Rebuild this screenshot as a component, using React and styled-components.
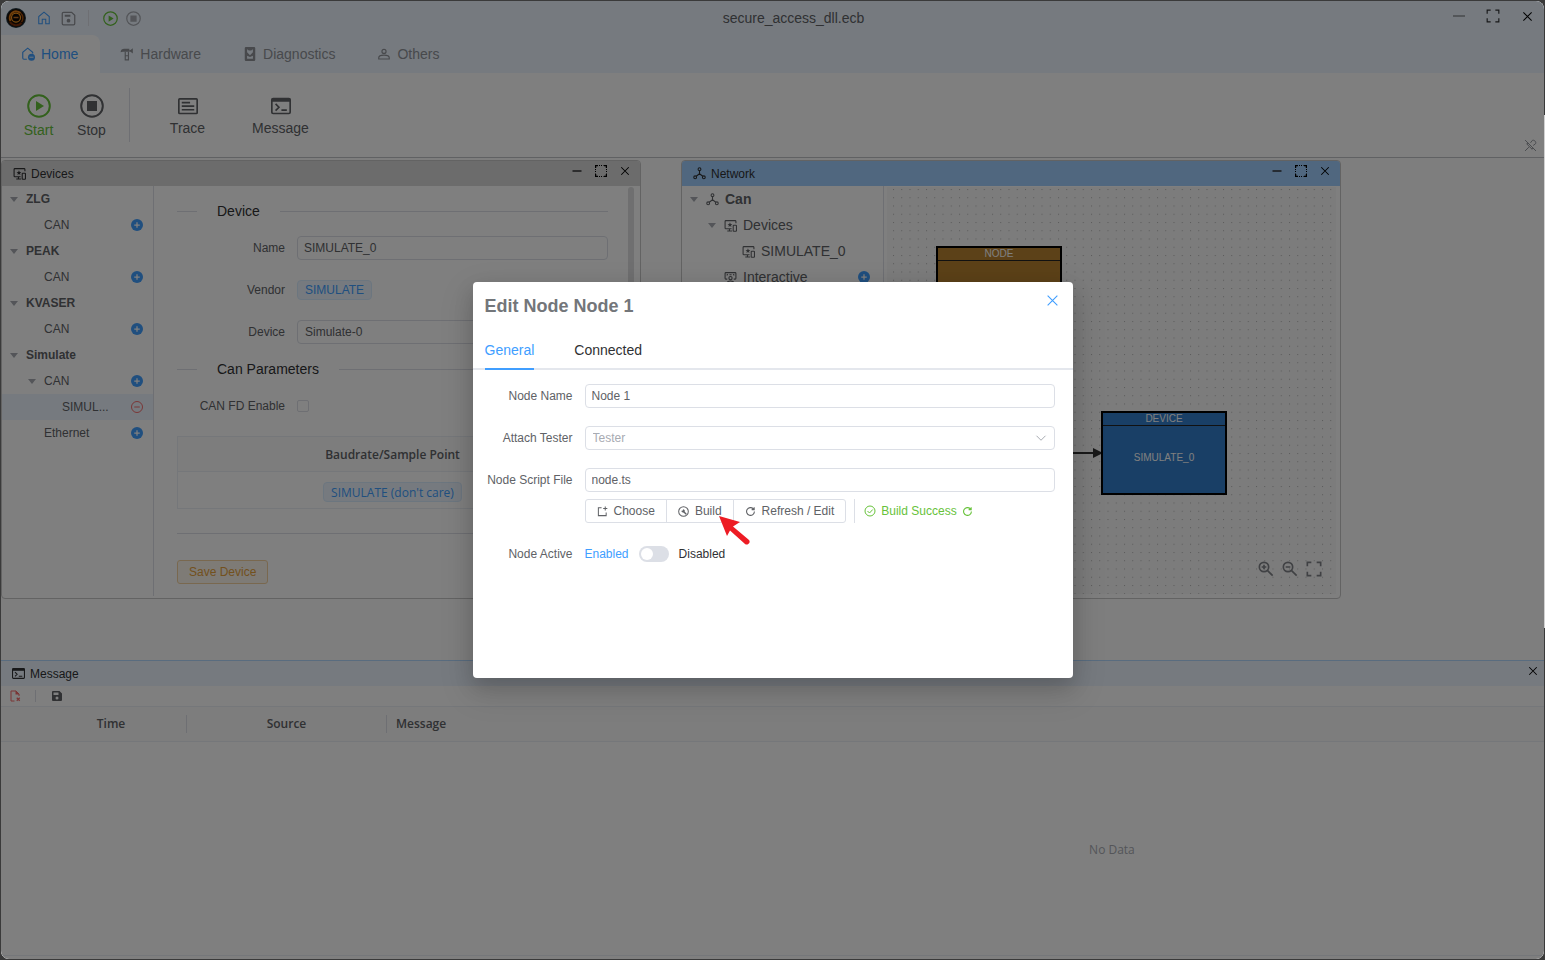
import { useState } from 'react'
import styled, { createGlobalStyle, css } from 'styled-components'

const c = {
  primary: '#409eff',
  primaryLight: '#ecf5ff',
  success: '#67c23a',
  warning: '#e6a23c',
  danger: '#f56c6c',
  text: '#303133',
  regular: '#606266',
  muted: '#909399',
  placeholder: '#a8abb2',
  border: '#dcdfe6',
  borderLight: '#e4e7ed',
  borderLighter: '#ebeef5'
}

const tableFont = "'Open Sans', 'Noto Sans', sans-serif"

const GlobalStyle = createGlobalStyle`
  * {
    box-sizing: border-box;
  }
  body {
    margin: 0;
    font-family: 'Liberation Sans', Arial, sans-serif;
    font-size: 12px;
    color: ${c.text};
  }
  button, input, select {
    font: inherit;
    color: inherit;
    margin: 0;
  }
`

/* ---------- icons ---------- */

const Svg = styled.svg`
  display: block;
  flex: none;
  fill: none;
  stroke: currentColor;
`

const Icon = ({ size = 14, w = 2, box = 24, children, ...rest }) => (
  <Svg width={size} height={size} viewBox={`0 0 ${box} ${box}`} strokeWidth={w} aria-hidden='true' {...rest}>
    {children}
  </Svg>
)

const Logo = () => (
  <Icon size={20} box={40} w={0}>
    <circle cx='20' cy='20' r='20' fill='#20343f' />
    <circle cx='20' cy='20' r='18' fill='#1c0f06' />
    <path d='M9 26a13 13 0 0 1 20-16' stroke='#e07b14' strokeWidth='4' />
    <path d='M29 10a13 13 0 0 1 2 18' stroke='#a04c0c' strokeWidth='3' />
    <path d='M8 28a15 15 0 0 0 23 2' stroke='#7a2c08' strokeWidth='4' />
    <circle cx='20' cy='19' r='9' fill='#0c0604' stroke='#ff9a1f' strokeWidth='2.500' />
    <path d='M15 19h10' stroke='#c87526' strokeWidth='3' />
  </Icon>
)

const HomeIcon = props => (
  <Icon {...props}>
    <path d='M9 22H3V9.500L12 2l9 7.500V22h-6v-8H9z' />
  </Icon>
)

const HomeTabIcon = props => (
  <Icon {...props}>
    <path d='M10 21H5a2 2 0 0 1-2-2V9l8.500-7L20 9v2' />
    <circle cx='18' cy='17.500' r='6' fill='currentColor' stroke='none' />
    <path d='M14.500 17.500h7' stroke='#fff' strokeWidth='1.500' />
  </Icon>
)

const SaveIcon = props => (
  <Icon {...props}>
    <path d='M4 2h13l5 5v13a2 2 0 0 1-2 2H4a2 2 0 0 1-2-2V4a2 2 0 0 1 2-2z' />
    <path d='M6 7.500h9' strokeWidth='3' />
    <circle cx='12' cy='15.500' r='3' fill='currentColor' stroke='none' />
  </Icon>
)

const SaveFilledIcon = props => (
  <Icon {...props}>
    <path
      d='M4 2h13l5 5v13a2 2 0 0 1-2 2H4a2 2 0 0 1-2-2V4a2 2 0 0 1 2-2zm1 3v5h10V5zm7 8a3 3 0 1 0 0 6 3 3 0 0 0 0-6z'
      fill='currentColor'
      fillRule='evenodd'
      stroke='none'
    />
  </Icon>
)

const PlayIcon = props => (
  <Icon {...props}>
    <circle cx='12' cy='12' r='10.800' />
    <path d='M9 7v10l8-5z' fill='currentColor' stroke='none' />
  </Icon>
)

const StopIcon = props => (
  <Icon {...props}>
    <circle cx='12' cy='12' r='10.800' />
    <path d='M7 7h10v10H7z' fill='currentColor' stroke='none' />
  </Icon>
)

const HammerIcon = props => (
  <Icon {...props}>
    <path d='M1 9c0-4 3-6 6-6h9v5h-6H5z' fill='currentColor' stroke='none' />
    <path d='M16 5h2l4-3v9l-4-3h-2z' fill='currentColor' stroke='none' />
    <path d='M9 8v14h5.500V8M9 15h5' />
  </Icon>
)

const DiagnosticsIcon = props => (
  <Icon {...props}>
    <path
      d='M5 0h14a2 2 0 0 1 2 2v20a2 2 0 0 1-2 2H5a2 2 0 0 1-2-2V2a2 2 0 0 1 2-2zm2 4v5l5 5 5-5V4l-3 2h-4zm0 11v5h10v-5l-5 2z'
      fill='currentColor'
      fillRule='evenodd'
      stroke='none'
    />
  </Icon>
)

const UserIcon = props => (
  <Icon {...props}>
    <circle cx='12' cy='7.500' r='3.500' />
    <path d='M3 20.500v-2c0-3 4-4.500 9-4.500s9 1.500 9 4.500v2z' />
  </Icon>
)

const TraceIcon = props => (
  <Icon {...props}>
    <rect x='1' y='3.500' width='22' height='17.500' rx='1' />
    <path d='M4.500 8h10M4.500 12.200h15M4.500 16.500h15' />
  </Icon>
)

const TerminalIcon = props => (
  <Icon {...props}>
    <rect x='1' y='3' width='22' height='18' rx='1.500' />
    <path d='M1 5h22' strokeWidth='4' />
    <path d='M5.500 9.500l4 4-4 4M12.500 17h6.500' />
  </Icon>
)

const DevicesIcon = props => (
  <Icon {...props}>
    <path d='M22 8V4.500a1.500 1.500 0 0 0-1.500-1.500h-17A1.500 1.500 0 0 0 2 4.500v12A1.500 1.500 0 0 0 3.500 18H14M10 18v4M6 22h9' />
    <rect x='17' y='11.500' width='6' height='11' rx='1' />
    <path d='M11 6l1.300 3.200 3.200.3-2.500 2 .8 3.200L11 13l-2.800 1.700.8-3.200-2.500-2 3.200-.3z' fill='currentColor' stroke='none' />
  </Icon>
)

const NetworkIcon = props => (
  <Icon {...props}>
    <circle cx='12' cy='4' r='2.600' />
    <circle cx='4' cy='19' r='2.600' />
    <circle cx='20' cy='19' r='2.600' />
    <path d='M12 7v6M12 12.500L6 17M12 12.500L18 17' />
  </Icon>
)

const InteractiveIcon = props => (
  <Icon {...props}>
    <path d='M6 15H3.500A1.500 1.500 0 0 1 2 13.500v-9A1.500 1.500 0 0 1 3.500 3h17A1.500 1.500 0 0 1 22 4.500v9a1.500 1.500 0 0 1-1.500 1.500H18' />
    <circle cx='12' cy='13' r='3' />
    <path d='M5.500 23c0-3 3-4.500 6.500-4.500s6.500 1.500 6.500 4.500M5 8l2-2M17 6l2 2M10 7h4' />
  </Icon>
)

const PlusIcon = props => (
  <Icon {...props}>
    <circle cx='12' cy='12' r='12' fill='currentColor' stroke='none' />
    <path d='M12 6.500v11M6.500 12h11' stroke='#fff' strokeWidth='2.500' />
  </Icon>
)

const MinusIcon = props => (
  <Icon {...props}>
    <circle cx='12' cy='12' r='11' />
    <path d='M6.500 12h11' />
  </Icon>
)

const CaretIcon = () => (
  <Icon size={10} box={10}>
    <path d='M1 3h8L5 8z' fill='currentColor' stroke='none' />
  </Icon>
)

const CloseIcon = props => (
  <Icon {...props}>
    <path d='M3 3l18 18M21 3L3 21' />
  </Icon>
)

const DashIcon = props => (
  <Icon {...props}>
    <path d='M3 12h18' />
  </Icon>
)

const ExpandIcon = props => (
  <Icon {...props}>
    <path d='M2 8V2h6M16 2h6v6M22 16v6h-6M8 22H2v-6' />
  </Icon>
)

const MarqueeIcon = () => (
  <Icon size={12} box={12} w={1}>
    <path d='M.500 3V.500H3M9 .500h2.500V3M11.500 9v2.500H9M3 11.500H.500V9' strokeWidth='1.500' />
    <path d='M4 .500h4.500M4 11.500h4.500M.500 4v4.500M11.500 4v4.500' strokeDasharray='1 1' />
  </Icon>
)

const PinOffIcon = props => (
  <Icon {...props}>
    <path d='M2 2l20 20M2 22l7-7M5 9l10 10M5 9l4-1M15 19l1-4M12 7l3-4c3-3 9 3 6 6l-4 3' />
  </Icon>
)

const ZoomIcon = ({ plus, ...rest }) => (
  <Icon {...rest}>
    <circle cx='9' cy='9' r='7' />
    <path d='M14 14l8 8' />
    <path d={plus ? 'M9 5.500v7M5.500 9h7' : 'M5.500 9h7'} />
  </Icon>
)

const ChooseIcon = props => (
  <Icon {...props}>
    <path d='M10 4H3v17h17v-7M18 1v9M13.500 5.500h9' />
  </Icon>
)

const BuildIcon = props => (
  <Icon {...props}>
    <circle cx='12' cy='12' r='10.500' />
    <path d='M12 12l6 6' strokeWidth='3' />
    <path d='M8.500 7.500l2.500 2.500v-3c3 0 4.500 2 3.500 5l-2 2c-3 1-5-.500-5-3.500h3z' fill='currentColor' stroke='none' />
  </Icon>
)

const RefreshIcon = props => (
  <Icon {...props}>
    <path d='M20.500 12a8.500 8.500 0 1 1-2.500-6l1.500 1.500M20 2.500V8h-5.500' />
  </Icon>
)

const CheckIcon = props => (
  <Icon {...props}>
    <circle cx='12' cy='12' r='10' />
    <path d='M7 12l4 4 6.500-7' />
  </Icon>
)

const ChevronIcon = props => (
  <Icon {...props}>
    <path d='M3 7.500l9 9 9-9' />
  </Icon>
)

const FileRemoveIcon = props => (
  <Icon {...props}>
    <path d='M11 22H4V2h10l6 6v4' />
    <path d='M13 1v8h8z' fill='currentColor' stroke='none' />
    <path d='M15.500 15.500l6 6M21.500 15.500l-6 6' strokeWidth='2.500' />
  </Icon>
)

/* ---------- frame ---------- */

const Desktop = styled.div`
  height: 100vh;
  padding: 1px;
  background: linear-gradient(#d0d0d0, #d0d0d0) right 115px / 1px 513px no-repeat, #3a3a3a;
`

const AppWindow = styled.div`
  position: relative;
  display: flex;
  flex-direction: column;
  height: 100%;
  border-radius: 8px;
  overflow: hidden;
  background: #fff;
`

const IconButton = styled.button`
  display: flex;
  align-items: center;
  justify-content: center;
  flex: none;
  width: ${p => p.$w || 24}px;
  height: ${p => p.$h || 24}px;
  padding: 0;
  border: 0;
  background: none;
  color: ${p => p.$color || '#000'};
  cursor: pointer;
`

const TitleBar = styled.header`
  display: flex;
  align-items: center;
  flex: none;
  height: 34px;
  background: ${c.primaryLight};
`

const QuickActions = styled.div`
  display: flex;
  align-items: center;
  flex: none;
  width: 144px;
  padding-left: 5px;
`

const VLine = styled.span`
  flex: none;
  width: 1px;
  height: ${p => p.$h}px;
  margin: 0 ${p => p.$gap || 0}px;
  background: ${c.border};
`

const AppTitle = styled.h1`
  flex: 1;
  margin: 0;
  font-size: 14px;
  font-weight: 400;
  text-align: center;
  color: ${c.regular};
`

const WindowControls = styled.div`
  display: flex;
  align-self: flex-start;
`

const TabBar = styled.nav`
  display: flex;
  flex: none;
  height: 38px;
  background: ${c.primaryLight};
`

const RibbonTab = styled.button`
  display: flex;
  align-items: center;
  gap: 6px;
  padding: 0 22px 0 20px;
  border: 0;
  border-radius: 0 8px 0 0;
  font-size: 14px;
  background: ${p => (p.$active ? '#fff' : 'none')};
  color: ${p => (p.$active ? c.primary : c.muted)};
`

const Ribbon = styled.div`
  display: flex;
  align-items: center;
  flex: none;
  height: 85px;
  padding-left: 11px;
  border-bottom: 1px solid #c0c2c6;
`

const RibbonButton = styled.button`
  display: flex;
  flex-direction: column;
  align-items: center;
  gap: 2px;
  width: ${p => (p.$wide ? 93 : 53)}px;
  padding: 4px 0 0;
  border: 0;
  background: none;
  font-size: 14px;
  line-height: 20px;
  color: ${p => p.$color || c.regular};
`

const PinButton = styled(IconButton)`
  align-self: flex-end;
  margin-left: auto;
  margin-right: 2px;
`

/* ---------- workspace windows ---------- */

const Workspace = styled.main`
  position: relative;
  flex: 1;
  min-height: 0;
  overflow: hidden;
  background: #fcfcfc;
`

const Pane = styled.section`
  position: absolute;
  top: 2px;
  left: ${p => p.$left}px;
  display: flex;
  flex-direction: column;
  width: ${p => p.$width}px;
  height: 439px;
  border: 1px solid #c6c6c6;
  border-radius: 4px;
  background: #fff;
  overflow: hidden;
`

const PaneHeader = styled.div`
  display: flex;
  align-items: center;
  flex: none;
  gap: 5px;
  height: 25px;
  padding: 0 3px 0 11px;
  background: ${p => p.$bg};
  color: ${c.text};
`

const PaneTitle = styled.h2`
  flex: 1;
  margin: 0;
  font-size: 12px;
  font-weight: 400;
`

const PaneBody = styled.div`
  display: flex;
  flex: 1;
  min-height: 0;
  padding-bottom: 2px;
`

const Tree = styled.ul`
  flex: none;
  width: ${p => p.$width}px;
  margin: 0;
  padding: 0;
  list-style: none;
  border-right: 1px solid ${c.border};
  font-size: ${p => p.$size || 12}px;
  color: ${c.regular};
`

const TreeRow = styled.li`
  display: flex;
  align-items: center;
  height: 26px;
  padding-left: ${p => p.$level * 18}px;
  padding-right: ${p => p.$end}px;
  background: ${p => (p.$selected ? c.primaryLight : 'none')};
  font-weight: ${p => (p.$bold ? 700 : 400)};
`

const CaretBox = styled.span`
  display: flex;
  justify-content: center;
  flex: none;
  width: 24px;
  color: ${c.placeholder};
`

const TreeIcon = styled.span`
  width: 19px;
  flex: none;
`

const TreeLabel = styled.span`
  flex: 1;
  overflow: hidden;
  white-space: nowrap;
`

const FormArea = styled.form`
  display: flex;
  flex-direction: column;
  flex: 1;
  min-width: 0;
  padding: 18px 8px 0 23px;
`

const ScrollTrack = styled.div`
  width: 6px;
  height: 340px;
  margin: 1px 6px 0 12px;
  border-radius: 3px;
  background: #dedfe0;
`

const Divider = styled.div`
  display: flex;
  align-items: center;
  gap: 20px;
  height: 14px;
  margin-bottom: 18px;
  font-size: 14px;
  &::before,
  &::after {
    content: '';
    height: 1px;
    background: ${c.border};
  }
  &::before {
    width: 20px;
  }
  &::after {
    flex: 1;
  }
`

const Rule = styled.hr`
  width: 100%;
  height: 1px;
  margin: 24px 0 26px;
  border: 0;
  background: ${c.border};
`

const Field = styled.div`
  display: grid;
  grid-template-columns: ${p => p.$label || 108}px 1fr;
  column-gap: 12px;
  align-items: center;
  min-height: 24px;
  margin-bottom: ${p => (p.$tight ? 7 : 18)}px;
  color: ${c.regular};
  & > label,
  & > span:first-child {
    text-align: right;
    white-space: nowrap;
  }
`

const boxed = css`
  width: 100%;
  height: 24px;
  padding: 0 7px;
  border: 1px solid ${c.border};
  border-radius: 4px;
  background: #fff;
  color: ${c.regular};
  outline: none;
`

const TextInput = styled.input`
  ${boxed}
  padding: 0 6px;
`

const SelectBox = styled.div`
  position: relative;
  & > svg {
    position: absolute;
    top: 6px;
    right: 8px;
    color: ${c.placeholder};
    pointer-events: none;
  }
`

const Select = styled.select`
  ${boxed}
  appearance: none;
  color: ${p => (p.$empty ? c.placeholder : c.regular)};
`

const Tag = styled.span`
  display: inline-flex;
  align-items: center;
  justify-self: start;
  height: 20px;
  padding: 0 7px;
  border: 1px solid #d9ecff;
  border-radius: 4px;
  background: ${c.primaryLight};
  color: ${c.primary};
`

const Checkbox = styled.input`
  appearance: none;
  width: 12px;
  height: 12px;
  border: 1px solid ${c.border};
  border-radius: 2px;
`

const BaudTable = styled.table`
  width: 100%;
  border: 1px solid ${c.borderLighter};
  border-collapse: separate;
  border-spacing: 0;
  font-family: ${tableFont};
  color: ${c.regular};
  th {
    height: 35px;
    padding: 0;
    border-bottom: 1px solid ${c.borderLighter};
    background: #fafafa;
    font-weight: 600;
  }
  td {
    height: 36px;
    padding: 4px 0 0;
    text-align: center;
  }
`

const SaveButton = styled.button`
  align-self: flex-start;
  height: 24px;
  padding: 0 11px;
  border: 1px solid #f3d19e;
  border-radius: 3px;
  background: #fdf6ec;
  color: ${c.warning};
`

/* ---------- network graph ---------- */

const Graph = styled.div`
  position: relative;
  flex: 1;
  margin: 1px 4px 2px 3px;
  background: #f8f8f8;
  & > svg {
    position: absolute;
    inset: 0;
  }
`

const GraphNode = styled.div`
  position: absolute;
  left: ${p => p.$x}px;
  top: ${p => p.$y}px;
  display: flex;
  flex-direction: column;
  width: 126px;
  height: 84px;
  border: 2px solid #000;
  background: ${p => p.$bg};
  font-size: 10px;
  text-align: center;
  color: #fff;
`

const NodeKind = styled.div`
  height: 13px;
  line-height: 12px;
  border-bottom: 1px solid #222;
`

const NodeName = styled.div`
  display: flex;
  flex: 1;
  align-items: center;
  justify-content: center;
  padding-bottom: 4px;
`

const GraphTools = styled.div`
  position: absolute;
  right: 10px;
  bottom: 13px;
  display: flex;
`

/* ---------- message panel ---------- */

const MessagePanel = styled.section`
  display: flex;
  flex-direction: column;
  flex: none;
  height: 299px;
  padding-bottom: 3px;
  border-top: 1px solid #b3d8ff;
  background: #fff;
`

const MessageTools = styled.div`
  display: flex;
  align-items: center;
  flex: none;
  height: 20px;
  padding-left: 2px;
`

const MessageTable = styled.table`
  width: 100%;
  table-layout: fixed;
  border-collapse: separate;
  border-spacing: 0;
  border-top: 1px solid ${c.borderLighter};
  font-family: ${tableFont};
  color: ${c.regular};
  th {
    height: 35px;
    padding: 0;
    border-bottom: 1px solid ${c.borderLighter};
    background: #fafafa;
    font-weight: 600;
  }
`

const HeadCell = styled.div`
  line-height: 18px;
  padding-left: ${p => (p.$left ? 9 : 0)}px;
  text-align: ${p => (p.$left ? 'left' : 'center')};
  border-right: ${p => (p.$line ? `1px solid ${c.border}` : 0)};
`

const Empty = styled.p`
  flex: 1;
  margin: 0;
  padding: 98px 0 0 44%;
  border-bottom: 1px solid ${c.borderLighter};
  font-family: ${tableFont};
  line-height: 20px;
  text-align: center;
  color: ${c.placeholder};
`

/* ---------- dialog ---------- */

const Overlay = styled.div`
  position: absolute;
  inset: 0;
  display: flex;
  align-items: center;
  justify-content: center;
  background: rgba(0, 0, 0, 0.5);
`

const Dialog = styled.div`
  position: relative;
  width: 600px;
  min-height: 396px;
  border-radius: 4px;
  background: #fff;
  box-shadow: 0 12px 32px 4px rgba(0, 0, 0, 0.12), 0 8px 20px rgba(0, 0, 0, 0.12);
`

const DialogHeader = styled.div`
  display: flex;
  justify-content: space-between;
  height: 48px;
  padding: 12px 8px 0 12px;
`

const DialogTitle = styled.h2`
  margin: 0;
  font-size: 18px;
  line-height: 24px;
  color: #73767a;
`

const DialogTabs = styled.div`
  display: flex;
  gap: 40px;
  height: 40px;
  padding-left: 12px;
  border-bottom: 2px solid ${c.borderLight};
`

const DialogTab = styled.button`
  height: 40px;
  padding: 2px 0 0;
  border: 0;
  border-bottom: 2px solid ${p => (p.$active ? c.primary : 'transparent')};
  background: none;
  font-size: 14px;
  color: ${p => (p.$active ? c.primary : c.text)};
`

const DialogForm = styled.form`
  padding: 14px 18px 0 0;
`

const ActionRow = styled.div`
  display: flex;
  align-items: center;
  padding-left: 112px;
  margin-bottom: 19px;
`

const GroupButton = styled.button`
  display: flex;
  align-items: center;
  gap: 6px;
  height: 24px;
  padding: 0 11px;
  border: 1px solid ${c.border};
  background: #fff;
  color: ${c.regular};
  & + & {
    margin-left: -1px;
  }
  &:first-child {
    border-radius: 3px 0 0 3px;
  }
  &:nth-child(3) {
    border-radius: 0 3px 3px 0;
  }
`

const BuildStatus = styled.span`
  display: flex;
  align-items: center;
  gap: 5px;
  padding-left: 1px;
  color: ${c.success};
`

const SwitchRow = styled.div`
  display: flex;
  align-items: center;
  gap: 10px;
`

const SwitchLabel = styled.label`
  color: ${p => (p.$on ? c.primary : c.text)};
`

const Switch = styled.input`
  appearance: none;
  width: 30px;
  height: 16px;
  padding: 2px;
  border-radius: 8px;
  background: ${c.border};
  &::before {
    content: '';
    display: block;
    width: 12px;
    height: 12px;
    border-radius: 50%;
    background: #fff;
  }
  &:checked {
    background: ${c.primary};
  }
  &:checked::before {
    margin-left: auto;
  }
`

const Pointer = styled.svg`
  position: absolute;
  left: 246px;
  top: 234px;
  pointer-events: none;
`

/* ---------- data ---------- */

const deviceTree = [
  { label: 'ZLG', level: 0, open: true },
  { label: 'CAN', level: 1, action: 'add' },
  { label: 'PEAK', level: 0, open: true },
  { label: 'CAN', level: 1, action: 'add' },
  { label: 'KVASER', level: 0, open: true },
  { label: 'CAN', level: 1, action: 'add' },
  { label: 'Simulate', level: 0, open: true },
  { label: 'CAN', level: 1, open: true, action: 'add' },
  { label: 'SIMUL...', level: 2, action: 'remove', selected: true },
  { label: 'Ethernet', level: 1, action: 'add' }
]

const networkTree = [
  { label: 'Can', level: 0, open: true, icon: NetworkIcon },
  { label: 'Devices', level: 1, open: true, icon: DevicesIcon },
  { label: 'SIMULATE_0', level: 2, icon: DevicesIcon },
  { label: 'Interactive', level: 1, action: 'add', icon: InteractiveIcon }
]

const ribbonTabs = [
  { label: 'Home', icon: HomeTabIcon },
  { label: 'Hardware', icon: HammerIcon },
  { label: 'Diagnostics', icon: DiagnosticsIcon },
  { label: 'Others', icon: UserIcon }
]

/* ---------- parts ---------- */

const PaneControls = () => (
  <WindowControls>
    <IconButton $h={20} $color={c.text} aria-label='Minimize'><DashIcon size={12} w={3} /></IconButton>
    <IconButton $h={20} aria-label='Maximize'><MarqueeIcon /></IconButton>
    <IconButton $h={20} aria-label='Close'><CloseIcon size={10} w={2.5} /></IconButton>
  </WindowControls>
)

const TreeItem = ({ item, end = 10 }) => {
  const ItemIcon = item.icon
  return (
    <TreeRow $level={item.level} $selected={item.selected} $bold={item.level === 0} $end={end}>
      <CaretBox>{item.open && <CaretIcon />}</CaretBox>
      {ItemIcon && <TreeIcon><ItemIcon size={13} /></TreeIcon>}
      <TreeLabel>{item.label}</TreeLabel>
      {item.action === 'add' && (
        <IconButton $w={12} $h={12} $color={c.primary} aria-label='Add'><PlusIcon size={12} /></IconButton>
      )}
      {item.action === 'remove' && (
        <IconButton $w={12} $h={12} $color={c.danger} aria-label='Remove'><MinusIcon size={12} /></IconButton>
      )}
    </TreeRow>
  )
}

const DevicesPane = () => (
  <Pane $left={0} $width={640}>
    <PaneHeader $bg='#d9d9d9'>
      <DevicesIcon size={13} />
      <PaneTitle>Devices</PaneTitle>
      <PaneControls />
    </PaneHeader>
    <PaneBody>
      <Tree $width={152}>
        {deviceTree.map((item, i) => <TreeItem key={i} item={item} />)}
      </Tree>
      <FormArea>
        <Divider>Device</Divider>
        <Field>
          <label htmlFor='dev-name'>Name</label>
          <TextInput id='dev-name' defaultValue='SIMULATE_0' />
        </Field>
        <Field>
          <span>Vendor</span>
          <Tag>SIMULATE</Tag>
        </Field>
        <Field>
          <label htmlFor='dev-device'>Device</label>
          <Select id='dev-device'><option>Simulate-0</option></Select>
        </Field>
        <Divider>Can Parameters</Divider>
        <Field>
          <label htmlFor='dev-fd'>CAN FD Enable</label>
          <Checkbox id='dev-fd' type='checkbox' />
        </Field>
        <BaudTable>
          <thead>
            <tr><th>Baudrate/Sample Point</th></tr>
          </thead>
          <tbody>
            <tr><td><Tag>SIMULATE (don't care)</Tag></td></tr>
          </tbody>
        </BaudTable>
        <Rule />
        <SaveButton type='button'>Save Device</SaveButton>
      </FormArea>
      <ScrollTrack />
    </PaneBody>
  </Pane>
)

const NetworkPane = () => (
  <Pane $left={680} $width={660}>
    <PaneHeader $bg='#a0cfff'>
      <NetworkIcon size={13} />
      <PaneTitle>Network</PaneTitle>
      <PaneControls />
    </PaneHeader>
    <PaneBody>
      <Tree $width={202} $size={14}>
        {networkTree.map(item => <TreeItem key={item.label} item={item} end={13} />)}
      </Tree>
      <Graph>
        <svg width='100%' height='100%'>
          <defs>
            <pattern id='dots' x='6' y='2' width='8.250' height='8.250' patternUnits='userSpaceOnUse'>
              <rect width='1' height='1' fill='#b4b4b4' />
            </pattern>
          </defs>
          <rect width='100%' height='100%' fill='url(#dots)' />
          <path d='M112 100v166h100' stroke='#333' strokeWidth='2' fill='none' />
          <path d='M206 261l10 5-10 5z' fill='#333' />
        </svg>
        <GraphNode $x={49} $y={59} $bg='#b88230'>
          <NodeKind>NODE</NodeKind>
          <NodeName>Node 1</NodeName>
        </GraphNode>
        <GraphNode $x={214} $y={224} $bg='#337ecc'>
          <NodeKind>DEVICE</NodeKind>
          <NodeName>SIMULATE_0</NodeName>
        </GraphNode>
        <GraphTools>
          <IconButton $color='#808388' aria-label='Zoom in'><ZoomIcon plus size={16} w={2.5} /></IconButton>
          <IconButton $color='#808388' aria-label='Zoom out'><ZoomIcon size={16} w={2.5} /></IconButton>
          <IconButton $color='#808388' aria-label='Fit'><ExpandIcon size={16} w={2.5} /></IconButton>
        </GraphTools>
      </Graph>
    </PaneBody>
  </Pane>
)

const Messages = () => (
  <MessagePanel>
    <PaneHeader $bg={c.primaryLight}>
      <TerminalIcon size={13} />
      <PaneTitle>Message</PaneTitle>
      <WindowControls>
        <IconButton $w={17} $h={20} aria-label='Close'><CloseIcon size={10} w={2.5} /></IconButton>
      </WindowControls>
    </PaneHeader>
    <MessageTools>
      <IconButton $h={20} $color={c.danger} aria-label='Clear'><FileRemoveIcon size={12} w={2} /></IconButton>
      <VLine $h={12} $gap={8} />
      <IconButton $w={26} $h={20} $color={c.regular} aria-label='Save'><SaveFilledIcon size={12} /></IconButton>
    </MessageTools>
    <MessageTable>
      <colgroup>
        <col width='35' />
        <col width='151' />
        <col width='200' />
        <col />
      </colgroup>
      <thead>
        <tr>
          <th aria-label='Type' />
          <th><HeadCell $line>Time</HeadCell></th>
          <th><HeadCell $line>Source</HeadCell></th>
          <th><HeadCell $left>Message</HeadCell></th>
        </tr>
      </thead>
    </MessageTable>
    <Empty>No Data</Empty>
  </MessagePanel>
)

const EditNodeDialog = () => {
  const [tab, setTab] = useState('General')
  const [tester, setTester] = useState('')
  const [disabled, setDisabled] = useState(false)
  return (
    <Overlay>
      <Dialog role='dialog' aria-labelledby='dlg-title'>
        <DialogHeader>
          <DialogTitle id='dlg-title'>Edit Node Node 1</DialogTitle>
          <IconButton $h={12} $color={c.primary} aria-label='Close'><CloseIcon size={13} w={2} /></IconButton>
        </DialogHeader>
        <DialogTabs>
          {['General', 'Connected'].map(name => (
            <DialogTab key={name} $active={tab === name} onClick={() => setTab(name)}>{name}</DialogTab>
          ))}
        </DialogTabs>
        <DialogForm>
          <Field $label={100}>
            <label htmlFor='node-name'>Node Name</label>
            <TextInput id='node-name' defaultValue='Node 1' />
          </Field>
          <Field $label={100}>
            <label htmlFor='node-tester'>Attach Tester</label>
            <SelectBox>
              <Select id='node-tester' value={tester} $empty={!tester} onChange={e => setTester(e.target.value)}>
                <option value=''>Tester</option>
              </Select>
              <ChevronIcon size={12} w={2} />
            </SelectBox>
          </Field>
          <Field $label={100} $tight>
            <label htmlFor='node-script'>Node Script File</label>
            <TextInput id='node-script' defaultValue='node.ts' />
          </Field>
          <ActionRow>
            <GroupButton type='button'><ChooseIcon size={11} w={2.2} />Choose</GroupButton>
            <GroupButton type='button'><BuildIcon size={11} w={2.2} />Build</GroupButton>
            <GroupButton type='button'><RefreshIcon size={11} w={2.4} />Refresh / Edit</GroupButton>
            <VLine $h={24} $gap={8} />
            <BuildStatus>
              <CheckIcon size={12} w={2} />
              Build Success
              <RefreshIcon size={11} w={2.4} />
            </BuildStatus>
          </ActionRow>
          <Field $label={100}>
            <label htmlFor='node-active'>Node Active</label>
            <SwitchRow>
              <SwitchLabel htmlFor='node-active' $on={!disabled}>Enabled</SwitchLabel>
              <Switch
                id='node-active'
                type='checkbox'
                role='switch'
                checked={disabled}
                onChange={e => setDisabled(e.target.checked)}
              />
              <SwitchLabel htmlFor='node-active' $on={disabled}>Disabled</SwitchLabel>
            </SwitchRow>
          </Field>
        </DialogForm>
        <Pointer width='32' height='30' viewBox='0 0 32 30'>
          <path d='M0 0l21 6-7 4.500 16 13.500c2 2-1 6-4 4L11 14.500 8 20z' fill='#ed1c24' />
        </Pointer>
      </Dialog>
    </Overlay>
  )
}

export default function App() {
  const [active, setActive] = useState('Home')
  return (
    <Desktop>
      <GlobalStyle />
      <AppWindow>
        <TitleBar>
          <QuickActions>
            <Logo />
            <IconButton $w={36} $color={c.primary} aria-label='Home'><HomeIcon size={14} w={1.8} /></IconButton>
            <IconButton $w={12} $color={c.muted} aria-label='Save'><SaveIcon size={15} /></IconButton>
            <VLine $h={16} $gap={14} />
            <IconButton $w={15} $color={c.success} aria-label='Start'><PlayIcon size={15} /></IconButton>
            <IconButton $w={31} $color={c.placeholder} aria-label='Stop'><StopIcon size={15} /></IconButton>
          </QuickActions>
          <AppTitle>secure_access_dll.ecb</AppTitle>
          <WindowControls>
            <IconButton $w={34} $h={30} $color={c.muted} aria-label='Minimize'><DashIcon size={16} w={2.5} /></IconButton>
            <IconButton $w={34} $h={30} $color={c.text} aria-label='Maximize'><ExpandIcon size={14} w={2} /></IconButton>
            <IconButton $w={34} $h={30} aria-label='Close'><CloseIcon size={11} w={2.2} /></IconButton>
          </WindowControls>
        </TitleBar>
        <TabBar>
          {ribbonTabs.map(({ label, icon: TabIcon }) => (
            <RibbonTab key={label} $active={active === label} onClick={() => setActive(label)}>
              <TabIcon size={14} />
              {label}
            </RibbonTab>
          ))}
        </TabBar>
        <Ribbon>
          <RibbonButton $color={c.success}><PlayIcon size={24} />Start</RibbonButton>
          <RibbonButton><StopIcon size={24} />Stop</RibbonButton>
          <VLine $h={54} $gap={11} />
          <RibbonButton $wide><TraceIcon size={20} />Trace</RibbonButton>
          <RibbonButton $wide><TerminalIcon size={20} />Message</RibbonButton>
          <PinButton $color={c.muted} aria-label='Unpin'><PinOffIcon size={13} w={1.8} /></PinButton>
        </Ribbon>
        <Workspace>
          <DevicesPane />
          <NetworkPane />
        </Workspace>
        <Messages />
        <EditNodeDialog />
      </AppWindow>
    </Desktop>
  )
}
